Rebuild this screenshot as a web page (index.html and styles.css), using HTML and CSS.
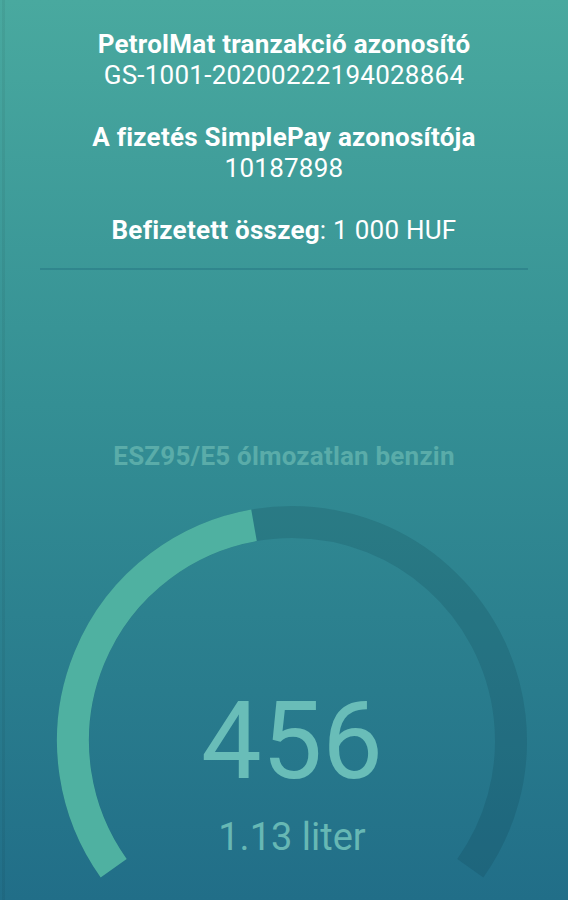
FILE: index.html
```html
<!DOCTYPE html>
<html lang="hu">
<head>
<meta charset="utf-8">
<title>PetrolMat</title>
<link rel="stylesheet" href="styles.css">
</head>
<body>
<main class="screen">
  <section class="info">
    <div class="group">
      <div class="label">PetrolMat tranzakció azonosító</div>
      <div class="value">GS-1001-20200222194028864</div>
    </div>
    <div class="group">
      <div class="label">A fizetés SimplePay azonosítója</div>
      <div class="value">10187898</div>
    </div>
    <div class="group">
      <div class="value"><span class="label-inline">Befizetett összeg</span>: 1 000 HUF</div>
    </div>
  </section>
  <hr class="divider">
  <div class="fuel">ESZ95/E5 ólmozatlan benzin</div>
  <section class="gauge">
    <svg class="gauge-svg" width="568" height="429" viewBox="0 0 568 429" aria-hidden="true">
      <path class="track" d="M 113.7 399.2 A 219 219 0 1 1 470.3 399.2"/>
      <path class="fill" d="M 113.7 399.2 A 219 219 0 0 1 254.0 56.3"/>
    </svg>
    <div class="gauge-text">
      <div class="amount">456</div>
      <div class="liters">1.13 liter</div>
    </div>
  </section>
</main>
</body>
</html>
```
FILE: styles.css
```css
html, body {
  margin: 0;
  padding: 0;
  height: 900px;
  overflow: hidden;
}

body {
  font-family: Roboto, "Liberation Sans", sans-serif;
  background:
    linear-gradient(to right, transparent 2px, rgba(0, 0, 0, 0.05) 2px, rgba(0, 0, 0, 0.05) 5px, transparent 5px),
    linear-gradient(to bottom, #49a99f 0%, #348f94 45%, #216e88 100%);
  color: #ffffff;
}

.screen {
  display: flex;
  flex-direction: column;
  height: 900px;
}

.info {
  display: flex;
  flex-direction: column;
  gap: 31px;
  padding-top: 29px;
  text-align: center;
  font-size: 26px;
  line-height: 31px;
  letter-spacing: 0.25px;
}

.label,
.label-inline {
  font-weight: 700;
}

.value {
  font-weight: 400;
}

.divider {
  margin: 22px 40px 0 40px;
  height: 2px;
  border: 0;
  background: rgba(30, 100, 120, 0.35);
}

.fuel {
  margin-top: 171px;
  text-align: center;
  font-size: 26px;
  line-height: 31px;
  letter-spacing: 0.2px;
  font-weight: 700;
  color: #5aaca9;
}

.gauge {
  position: relative;
  height: 429px;
  margin-top: -3px;
}

.gauge-svg {
  display: block;
}

.track {
  fill: none;
  stroke: rgba(10, 40, 60, 0.14);
  stroke-width: 32;
}

.fill {
  fill: none;
  stroke: #4fb1a1;
  stroke-width: 32;
}

.gauge-text {
  position: absolute;
  left: 0;
  top: 218px;
  width: 584px;
  text-align: center;
}

.amount {
  font-size: 108px;
  line-height: 108px;
  color: #69bdb8;
}

.liters {
  margin-top: 20px;
  font-size: 38px;
  line-height: 44px;
  color: #67b8b4;
}
```
